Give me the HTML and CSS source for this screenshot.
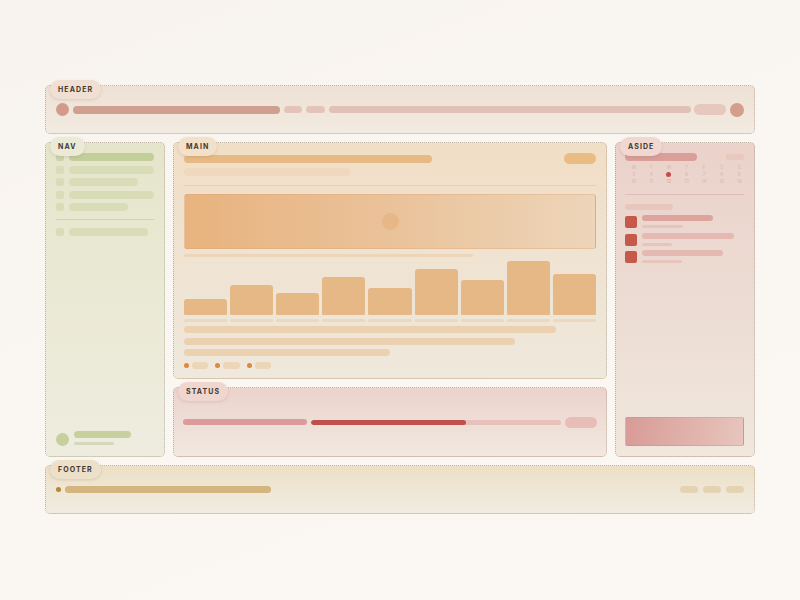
FILE: index.html
```html
<!DOCTYPE html>
<html>
<head>
<meta charset="utf-8">
<link rel="stylesheet" href="styles.css">
</head>
<body>
<div class="layout">
  <header class="panel header">
    <span class="tag">HEADER</span>
    <span class="circle c-head"></span>
    <span class="bar h-title"></span>
    <span class="bar h-pill"></span>
    <span class="bar h-pill h-pill2"></span>
    <span class="bar h-search"></span>
    <span class="bar h-btn"></span>
    <span class="circle c-head2"></span>
  </header>

  <nav class="panel nav">
    <span class="tag">NAV</span>
    <div class="nav-list">
      <div class="nav-row active"><span class="sq"></span><span class="bar nb" style="width:85px"></span></div>
      <div class="nav-row"><span class="sq"></span><span class="bar nb" style="width:85px"></span></div>
      <div class="nav-row"><span class="sq"></span><span class="bar nb" style="width:69px"></span></div>
      <div class="nav-row"><span class="sq"></span><span class="bar nb" style="width:85px"></span></div>
      <div class="nav-row"><span class="sq"></span><span class="bar nb" style="width:59px"></span></div>
    </div>
    <div class="nav-div"></div>
    <div class="nav-row"><span class="sq"></span><span class="bar nb" style="width:79px"></span></div>
    <div class="user">
      <span class="circle avatar"></span>
      <div class="user-text">
        <span class="bar u-name"></span>
        <span class="bar u-sub"></span>
      </div>
    </div>
  </nav>

  <main class="panel main">
    <span class="tag">MAIN</span>
    <div class="m-head">
      <span class="bar m-title"></span>
      <span class="bar m-pill"></span>
    </div>
    <span class="bar m-sub"></span>
    <div class="m-div"></div>
    <div class="hero"><span class="circle hero-dot"></span></div>
    <span class="bar m-line"></span>
    <div class="chart">
      <span class="col" style="height:16px"></span>
      <span class="col" style="height:30px"></span>
      <span class="col" style="height:22px"></span>
      <span class="col" style="height:38px"></span>
      <span class="col" style="height:27px"></span>
      <span class="col" style="height:46px"></span>
      <span class="col" style="height:35px"></span>
      <span class="col" style="height:54px"></span>
      <span class="col" style="height:41px"></span>
    </div>
    <div class="chart-labels">
      <span></span><span></span><span></span><span></span><span></span><span></span><span></span><span></span><span></span>
    </div>
    <span class="bar t-line" style="width:372px"></span>
    <span class="bar t-line t2" style="width:331px"></span>
    <span class="bar t-line t3" style="width:206px"></span>
    <div class="legend">
      <span class="lg"><span class="dot"></span><span class="bar lg-pill"></span></span>
      <span class="lg"><span class="dot"></span><span class="bar lg-pill" style="width:17px"></span></span>
      <span class="lg"><span class="dot"></span><span class="bar lg-pill"></span></span>
    </div>
  </main>

  <section class="panel status">
    <span class="tag">STATUS</span>
    <span class="bar s-bar"></span>
    <span class="track"><span class="fill" style="width:62%"></span></span>
    <span class="bar s-pill"></span>
  </section>

  <aside class="panel aside">
    <span class="tag">ASIDE</span>
    <div class="a-head">
      <span class="bar a-title"></span>
      <span class="bar a-pill"></span>
    </div>
    <div class="cal">
      <span>M</span><span>T</span><span>W</span><span>T</span><span>F</span><span>S</span><span>S</span>
      <span>3</span><span>4</span><span class="today"></span><span>6</span><span>7</span><span>8</span><span>9</span>
      <span>10</span><span>11</span><span class="hl">12</span><span>13</span><span>14</span><span>15</span><span>16</span>
    </div>
    <div class="a-div"></div>
    <span class="bar a-sec"></span>
    <div class="a-list">
      <div class="a-item"><span class="a-sq"></span><div class="a-text"><span class="bar a-b" style="width:71px"></span><span class="bar a-s" style="width:41px"></span></div></div>
      <div class="a-item"><span class="a-sq"></span><div class="a-text"><span class="bar a-b a-b2" style="width:92px"></span><span class="bar a-s" style="width:30px"></span></div></div>
      <div class="a-item"><span class="a-sq"></span><div class="a-text"><span class="bar a-b a-b2" style="width:81px"></span><span class="bar a-s" style="width:40px"></span></div></div>
    </div>
    <div class="a-box"></div>
  </aside>

  <footer class="panel footer">
    <span class="tag">FOOTER</span>
    <span class="dot f-dot"></span>
    <span class="bar f-bar"></span>
    <span class="f-links">
      <span class="bar f-pill"></span>
      <span class="bar f-pill"></span>
      <span class="bar f-pill"></span>
    </span>
  </footer>
</div>
</body>
</html>
```

FILE: styles.css
```css
* { box-sizing: border-box; }
html, body { margin: 0; padding: 0; }
body {
  width: 800px;
  height: 600px;
  overflow: hidden;
  font-family: "Inter", "DejaVu Sans", sans-serif;
  background: linear-gradient(160deg, #f8f3ee 0%, #faf7f2 50%, #fbf8f4 100%);
}
.layout {
  width: 710px;
  margin: 85px auto 0;
  display: grid;
  grid-template-columns: 120px 434px 140px;
  grid-template-rows: 49px 237px 70px 49px;
  gap: 8px;
}
.panel {
  position: relative;
  border: 1px dotted rgba(140, 115, 95, 0.45);
  border-radius: 5px;
}
.tag {
  position: absolute;
  top: -6px;
  left: 4px;
  height: 19px;
  padding: 0 8px;
  border-radius: 10px;
  font-size: 7px;
  font-weight: 700;
  letter-spacing: 1.1px;
  line-height: 19px;
  color: #43372f;
  box-shadow: 0 1px 3px rgba(120, 90, 70, 0.18);
}
.bar { display: block; border-radius: 4px; }
.circle { display: block; border-radius: 50%; flex: none; }
.dot { display: block; width: 5px; height: 5px; border-radius: 50%; flex: none; }

/* header */
.header {
  grid-column: 1 / 4;
  display: flex;
  align-items: center;
  gap: 4px;
  padding: 0 10px;
  background: linear-gradient(180deg, #eee0d4 0%, #f2ebe1 100%);
}
.header .tag { background: #f0dfd3; }
.c-head { width: 13px; height: 13px; background: #d49a89; }
.h-title { width: 207px; height: 8px; background: #cf9f8f; }
.h-pill { width: 18px; height: 7px; background: #e4c4b9; }
.h-pill2 { width: 19px; }
.h-search { flex: 1; height: 7px; background: #e1c1b7; }
.h-btn { width: 32px; height: 11px; border-radius: 6px; background: #e6c8be; margin-left: -1px; }
.c-head2 { width: 14px; height: 14px; background: #d49d8c; }

/* nav */
.nav {
  grid-column: 1;
  grid-row: 2 / 4;
  display: flex;
  flex-direction: column;
  padding: 10px 10px 10px 10px;
  background: linear-gradient(180deg, #e5e5cb 0%, #ebead6 55%, #eeecdf 100%);
}
.nav .tag { background: #eaead6; }
.nav-list { display: flex; flex-direction: column; gap: 4.5px; }
.nav-row { display: flex; align-items: center; gap: 5px; height: 8px; }
.sq { width: 8px; height: 8px; border-radius: 2px; background: #dadcb9; flex: none; }
.nb { height: 8px; background: #d9ddb7; }
.nav-row.active .nb { background: #c3cf9b; }
.nav-row.active .sq { background: #ccd3a8; }
.nav-div { height: 1px; background: #d2d3b3; margin: 8px 0 8px; }
.user { margin-top: auto; display: flex; align-items: center; gap: 5px; }
.avatar { width: 13px; height: 13px; background: #c7cf9d; }
.user-text { display: flex; flex-direction: column; gap: 4px; margin-top: -3px; }
.u-name { width: 57px; height: 7px; background: #c6d19f; }
.u-sub { width: 40px; height: 3px; background: #d6d8ba; }

/* main */
.main {
  grid-column: 2;
  grid-row: 2;
  display: flex;
  flex-direction: column;
  padding: 10px 10px 0 10px;
  background: linear-gradient(180deg, #f1dec6 0%, #efe4d4 60%, #efe8dc 100%);
}
.main .tag { background: #f2e0c8; }
.m-head { display: flex; justify-content: space-between; align-items: center; height: 11px; }
.m-title { width: 248px; height: 8px; background: #e6b985; }
.m-pill { width: 32px; height: 11px; border-radius: 6px; background: #e9bc84; }
.m-sub { width: 166px; height: 8px; background: #efd8bd; margin-top: 4px; }
.m-div { height: 1px; background: #eacfb3; margin-top: 9px; }
.hero {
  margin-top: 8px;
  height: 55px;
  border-radius: 3px;
  border: 1px solid rgba(220, 160, 110, 0.35);
  background: linear-gradient(90deg, #e8b37e 0%, #eac29a 50%, #edd5b9 100%);
  display: flex;
  align-items: center;
  justify-content: center;
}
.hero-dot { width: 17px; height: 17px; background: #e7b786; }
.m-line { width: 289px; height: 3px; background: #ecd5b9; margin-top: 5px; }
.chart {
  margin-top: 4px;
  height: 54px;
  display: flex;
  align-items: flex-end;
  gap: 3px;
}
.col { flex: 1; background: #e5b886; border-radius: 3px 3px 1px 1px; }
.chart-labels { display: flex; gap: 3px; margin-top: 4px; }
.chart-labels span { flex: 1; height: 3px; border-radius: 2px; background: #ecd8bf; }
.t-line { height: 7px; background: #ecd1b1; margin-top: 4px; }
.t2 { margin-top: 5px; }
.t3 { margin-top: 4px; }
.legend { display: flex; align-items: center; gap: 7px; margin-top: 6px; height: 7px; }
.lg { display: flex; align-items: center; gap: 3px; }
.legend .dot { background: #dc8a3b; }
.lg-pill { width: 16px; height: 7px; background: #ecd5b9; }

/* status */
.status {
  grid-column: 2;
  grid-row: 3;
  display: flex;
  align-items: center;
  gap: 4px;
  padding: 0 9px 0 9px;
  background: linear-gradient(180deg, #ebd3cc 0%, #eedfd7 55%, #f1e8df 100%);
}
.status .tag { background: #efd7d0; }
.s-bar { width: 124px; height: 6px; background: #db9b9b; }
.track { flex: 1; height: 5px; border-radius: 3px; background: #e8c1bc; display: block; overflow: hidden; }
.fill { display: block; height: 100%; border-radius: 3px; background: #c0504b; }
.s-pill { width: 32px; height: 11px; border-radius: 6px; background: #e8bdb8; }

/* aside */
.aside {
  grid-column: 3;
  grid-row: 2 / 4;
  display: flex;
  flex-direction: column;
  padding: 10px 10px 10px 9px;
  background: linear-gradient(180deg, #ebd2cb 0%, #ecdcd3 50%, #f0e7dd 100%);
}
.aside .tag { background: #f0d8d0; }
.a-head { display: flex; justify-content: space-between; align-items: center; height: 8px; }
.a-title { width: 72px; height: 8px; background: #d99f98; }
.a-pill { width: 18px; height: 6px; border-radius: 2px; background: #e8c9bf; }
.cal {
  margin-top: 3px;
  margin-right: -4px;
  display: grid;
  grid-template-columns: repeat(7, 1fr);
  grid-auto-rows: 7px;
  font-size: 4.5px;
  line-height: 7px;
  text-align: center;
  color: #dcbdb4;
  font-weight: 600;
}
.cal span { display: flex; align-items: center; justify-content: center; }
.cal .today::after { content: ""; width: 5px; height: 5px; border-radius: 50%; background: #c44c45; }
.cal .hl { color: #e2aaa0; }
.a-div { height: 1px; background: #dfbeb5; margin-top: 9px; }
.a-sec { width: 48px; height: 6px; background: #e8c6bd; margin-top: 9px; }
.a-list { display: flex; flex-direction: column; gap: 5.5px; margin-top: 6px; }
.a-item { display: flex; align-items: flex-start; gap: 5px; height: 12px; }
.a-sq { width: 12px; height: 12px; border-radius: 2px; background: #c55a4b; flex: none; }
.a-text { display: flex; flex-direction: column; gap: 4px; margin-top: -1px; }
.a-b { height: 6px; background: #dea39c; }
.a-b2 { background: #e4b9b1; }
.a-s { height: 3px; background: #e7c5bd; }
.a-box {
  margin-top: auto;
  height: 29px;
  border-radius: 2px;
  border: 1px solid rgba(200, 130, 120, 0.3);
  background: linear-gradient(100deg, #d89b97 0%, #dfb0a9 50%, #e7c6bd 100%);
}

/* footer */
.footer {
  grid-column: 1 / 4;
  display: flex;
  align-items: center;
  padding: 0 10px;
  background: linear-gradient(180deg, #ecdfc5 0%, #efe7d6 55%, #f1ece0 100%);
}
.footer .tag { background: #ede0c9; }
.f-dot { background: #b8862f; margin-left: 0; }
.f-bar { width: 206px; height: 7px; background: #d4b47f; margin-left: 4px; }
.f-links { margin-left: auto; display: flex; gap: 5px; }
.f-pill { width: 18px; height: 7px; background: #e4d3b3; }
```
